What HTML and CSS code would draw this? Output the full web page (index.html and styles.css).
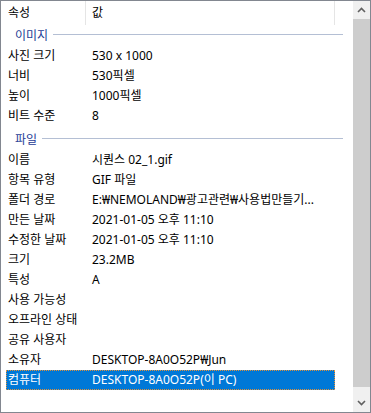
FILE: index.html
```html
<!DOCTYPE html>
<html lang="ko">
<head>
<meta charset="utf-8">
<link rel="stylesheet" href="styles.css">
</head>
<body>
<div class="frame">
  <div class="list">
    <div class="head">
      <div class="hcell hname">속성</div>
      <div class="hcell hval">값</div>
    </div>
    <div class="group first"><span class="gtitle">이미지</span><span class="gline"></span></div>
    <div class="row"><span class="name">사진 크기</span><span class="val">530 x 1000</span></div>
    <div class="row"><span class="name">너비</span><span class="val">530픽셀</span></div>
    <div class="row"><span class="name">높이</span><span class="val">1000픽셀</span></div>
    <div class="row"><span class="name">비트 수준</span><span class="val">8</span></div>
    <div class="group next"><span class="gtitle">파일</span><span class="gline"></span></div>
    <div class="row"><span class="name">이름</span><span class="val">시퀀스 02_1.gif</span></div>
    <div class="row"><span class="name">항목 유형</span><span class="val">GIF 파일</span></div>
    <div class="row"><span class="name">폴더 경로</span><span class="val">E:₩NEMOLAND₩광고관련₩사용법만들기...</span></div>
    <div class="row"><span class="name">만든 날짜</span><span class="val">2021-01-05 오후 11:10</span></div>
    <div class="row"><span class="name">수정한 날짜</span><span class="val">2021-01-05 오후 11:10</span></div>
    <div class="row"><span class="name">크기</span><span class="val">23.2MB</span></div>
    <div class="row"><span class="name">특성</span><span class="val">A</span></div>
    <div class="row"><span class="name">사용 가능성</span><span class="val"></span></div>
    <div class="row"><span class="name">오프라인 상태</span><span class="val"></span></div>
    <div class="row"><span class="name">공유 사용자</span><span class="val"></span></div>
    <div class="row"><span class="name">소유자</span><span class="val">DESKTOP-8A0O52P₩Jun</span></div>
    <div class="row selected"><span class="name">컴퓨터</span><span class="val">DESKTOP-8A0O52P(이 PC)</span></div>
  </div>
  <div class="scrollbar">
    <div class="arrow">
      <svg width="17" height="17" viewBox="0 0 17 17"><path d="M5 11 L8.5 7.5 L12 11" fill="none" stroke="#606060" stroke-width="1.6"/></svg>
    </div>
    <div class="thumb"></div>
    <div class="track"></div>
    <div class="arrow">
      <svg width="17" height="17" viewBox="0 0 17 17"><path d="M5 6 L8.5 9.5 L12 6" fill="none" stroke="#606060" stroke-width="1.6"/></svg>
    </div>
  </div>
</div>
</body>
</html>
```
FILE: styles.css
```css
* { box-sizing: border-box; }
html, body { margin: 0; padding: 0; background: #fff; }
body {
  font-family: "Noto Sans", "Noto Sans CJK KR", sans-serif;
  font-size: 12px;
  color: #000;
}
.frame {
  width: 371px;
  height: 413px;
  border: 1px solid #828790;
  display: flex;
  overflow: hidden;
  background: #fff;
}
.list {
  flex: 1;
  display: flex;
  flex-direction: column;
  overflow: hidden;
}
.head {
  height: 24px;
  display: flex;
  padding-left: 5px;
}
.hcell {
  height: 24px;
  line-height: 24px;
  border-right: 1px solid #e5e5e5;
  white-space: nowrap;
}
.hname { width: 80px; padding-left: 2px; }
.hval { width: 249px; padding-left: 6px; }
.group {
  height: 21px;
  display: flex;
  align-items: center;
  padding-left: 14px;
  padding-right: 10px;
}
.group.next { margin-top: 3px; }
.gtitle {
  color: #1e3c96;
  line-height: 21px;
  white-space: nowrap;
}
.gline {
  flex: 1;
  height: 1px;
  background: #b4bfd4;
  margin-left: 5px;
  margin-top: -3px;
}
.row {
  height: 20px;
  line-height: 18px;
  margin-left: 5px;
  width: 329px;
  display: flex;
  border: 1px solid transparent;
  white-space: nowrap;
}
.name { width: 84px; padding-left: 1px; }
.val { flex: 1; padding-left: 1px; overflow: hidden; }
.row.selected {
  background: #0078d7;
  color: #fff;
  border: 1px dotted #e0903a;
}
.scrollbar {
  width: 17px;
  display: flex;
  flex-direction: column;
  background: #f0f0f0;
}
.arrow {
  height: 17px;
  display: flex;
  align-items: center;
  justify-content: center;
}
.arrow svg { display: block; }
.thumb {
  height: 368px;
  margin-top: 1px;
  background: #cdcdcd;
}
.track { flex: 1; }
```
